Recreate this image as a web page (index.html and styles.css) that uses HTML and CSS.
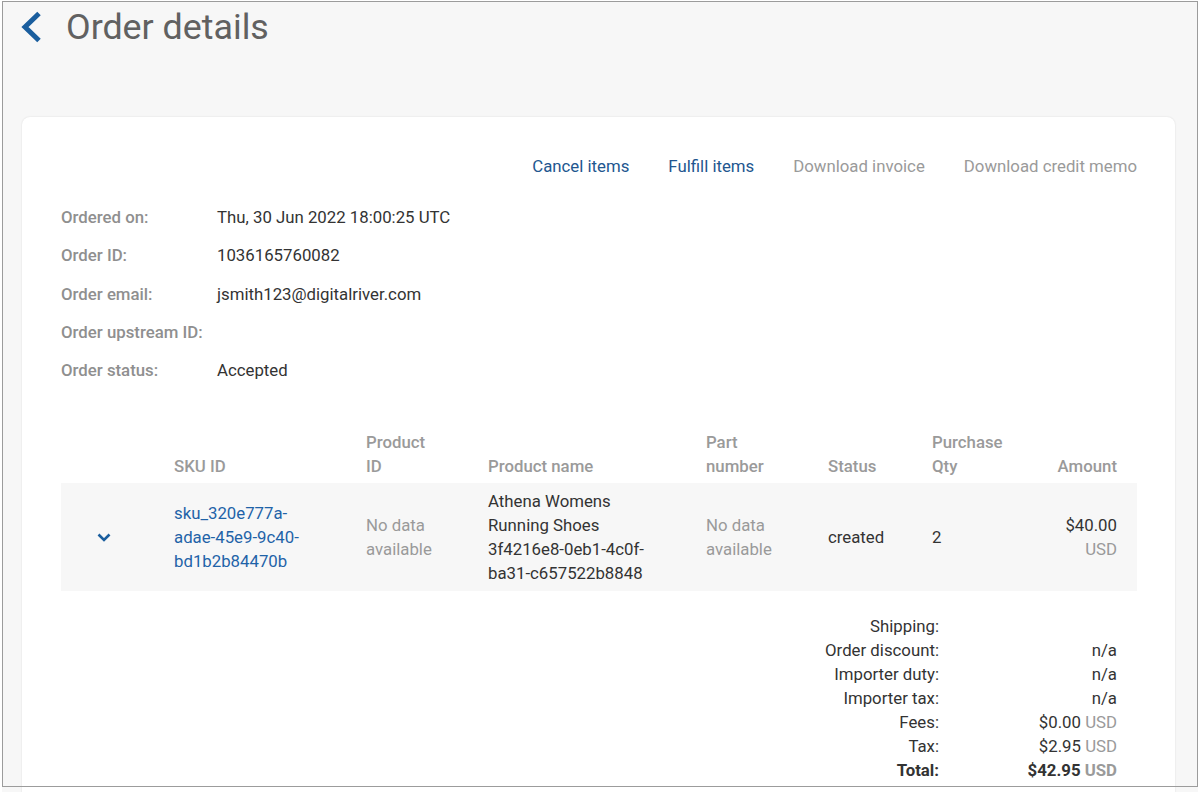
FILE: index.html
```html
<!DOCTYPE html>
<html lang="en">
<head>
<meta charset="utf-8">
<title>Order details</title>
<link rel="stylesheet" href="styles.css">
</head>
<body>
<div class="page">
  <header class="header">
    <a class="back" href="#" aria-label="Back">
      <svg width="22" height="32" viewBox="0 0 22 32"><polyline points="19,2.5 5,16 19,29.5" fill="none" stroke="#1a5e9e" stroke-width="5" stroke-linejoin="miter"/></svg>
    </a>
    <h1 class="title">Order details</h1>
  </header>

  <section class="card">
    <nav class="actions">
      <a class="action" href="#">Cancel items</a>
      <a class="action" href="#">Fulfill items</a>
      <span class="action disabled">Download invoice</span>
      <span class="action disabled">Download credit memo</span>
    </nav>

    <dl class="info">
      <dt>Ordered on:</dt><dd>Thu, 30 Jun 2022 18:00:25 UTC</dd>
      <dt>Order ID:</dt><dd>1036165760082</dd>
      <dt>Order email:</dt><dd>jsmith123@digitalriver.com</dd>
      <dt>Order upstream ID:</dt><dd></dd>
      <dt>Order status:</dt><dd>Accepted</dd>
    </dl>

    <table class="items">
      <colgroup>
        <col class="c1"><col class="c2"><col class="c3"><col class="c4"><col class="c5"><col class="c6"><col class="c7"><col class="c8">
      </colgroup>
      <thead>
        <tr>
          <th></th>
          <th class="p2">SKU ID</th>
          <th class="p3">Product ID</th>
          <th class="p4">Product name</th>
          <th class="p5">Part number</th>
          <th class="p6">Status</th>
          <th class="p7">Purchase Qty</th>
          <th class="p8">Amount</th>
        </tr>
      </thead>
      <tbody>
        <tr>
          <td class="toggle">
            <svg width="14" height="9" viewBox="0 0 14 9"><polyline points="1.5,1.5 7,7 12.5,1.5" fill="none" stroke="#1a5e9e" stroke-width="2.6"/></svg>
          </td>
          <td class="p2"><a class="sku" href="#">sku_320e777a-adae-45e9-9c40-bd1b2b84470b</a></td>
          <td class="p3 muted">No data available</td>
          <td class="p4">Athena Womens Running Shoes 3f4216e8-0eb1-4c0f-ba31-c657522b8848</td>
          <td class="p5 muted">No data available</td>
          <td class="p6">created</td>
          <td class="p7">2</td>
          <td class="p8">$40.00<br><span class="cur">USD</span></td>
        </tr>
      </tbody>
    </table>

    <dl class="summary">
      <dt>Shipping:</dt><dd></dd>
      <dt>Order discount:</dt><dd>n/a</dd>
      <dt>Importer duty:</dt><dd>n/a</dd>
      <dt>Importer tax:</dt><dd>n/a</dd>
      <dt>Fees:</dt><dd>$0.00 <span class="cur">USD</span></dd>
      <dt>Tax:</dt><dd>$2.95 <span class="cur">USD</span></dd>
      <dt class="total">Total:</dt><dd class="total">$42.95 <span class="cur">USD</span></dd>
    </dl>
  </section>
</div>
<div class="frame"></div>
</body>
</html>
```

FILE: styles.css
```css
html, body {
  margin: 0;
  background: #ffffff;
}

body {
  font-family: Roboto, "Noto Sans", Arial, sans-serif;
  font-size: 16.8px;
  color: #333333;
}

.page {
  margin: 1px 1px 0 2px;
  background: #f7f7f7;
  padding: 9px 23px 0 20px;
}

.header {
  display: flex;
  align-items: center;
  gap: 24px;
  height: 33px;
  margin-left: -2px;
}

.back {
  display: flex;
  width: 22px;
  height: 32px;
}

.title {
  margin: 0;
  font-size: 35.8px;
  line-height: 34px;
  font-weight: 400;
  color: #616161;
}

.card {
  margin-top: 74px;
  background: #ffffff;
  border-radius: 8px;
  box-shadow: 0 0 2px rgba(0, 0, 0, 0.12);
  padding: 39px 38px 40px 39px;
}

.actions {
  display: flex;
  justify-content: flex-end;
  gap: 39px;
  line-height: 20px;
}

.action {
  color: #22568f;
  text-decoration: none;
}

.action.disabled {
  color: #9a9a9a;
}

.info {
  display: grid;
  grid-template-columns: 156px 1fr;
  margin: 22px 0 0;
  line-height: 20px;
}

.info dt,
.info dd {
  margin: 0;
  padding: 9.125px 0;
}

.info dt {
  color: #8f8f8f;
  font-weight: 500;
}

.info dd {
  color: #333333;
}

.items {
  margin-top: 41px;
  width: 100%;
  border-collapse: collapse;
  table-layout: fixed;
  line-height: 24px;
}

.c1 { width: 113px; }
.c2 { width: 192px; }
.c3 { width: 122px; }
.c4 { width: 218px; }
.c5 { width: 122px; }
.c6 { width: 104px; }
.c7 { width: 100px; }
.c8 { width: 105px; }

.items th {
  text-align: left;
  vertical-align: bottom;
  font-weight: 500;
  color: #9a9a9a;
  padding: 0 0 5px;
}

.items td {
  vertical-align: middle;
  padding: 6px 0;
  background: #f7f7f7;
  color: #333333;
}

.items .p2 { padding-right: 50px; }
.items .p3 { padding-right: 50px; }
.items .p4 { padding-right: 40px; }
.items .p5 { padding-right: 50px; }
.items .p6 { padding-right: 10px; }
.items .p7 { padding-right: 20px; }
.items .p8 { padding-right: 20px; text-align: right; }

.items td.toggle {
  padding-left: 36px;
}

.toggle svg {
  display: block;
}

.sku {
  color: #1f63a8;
  text-decoration: none;
}

.muted {
  color: #9a9a9a !important;
}

.cur {
  color: #9a9a9a;
}

.summary {
  display: grid;
  grid-template-columns: auto 178px;
  justify-content: end;
  margin: 23px 0 0;
  padding-right: 20px;
  line-height: 24px;
}

.summary dt,
.summary dd {
  margin: 0;
  text-align: right;
  color: #333333;
}

.summary .total {
  font-weight: 700;
}

.frame {
  position: fixed;
  left: 2px;
  top: 1px;
  width: 1194px;
  height: 784px;
  border: 1px solid #9c9c9c;
  pointer-events: none;
}
```
